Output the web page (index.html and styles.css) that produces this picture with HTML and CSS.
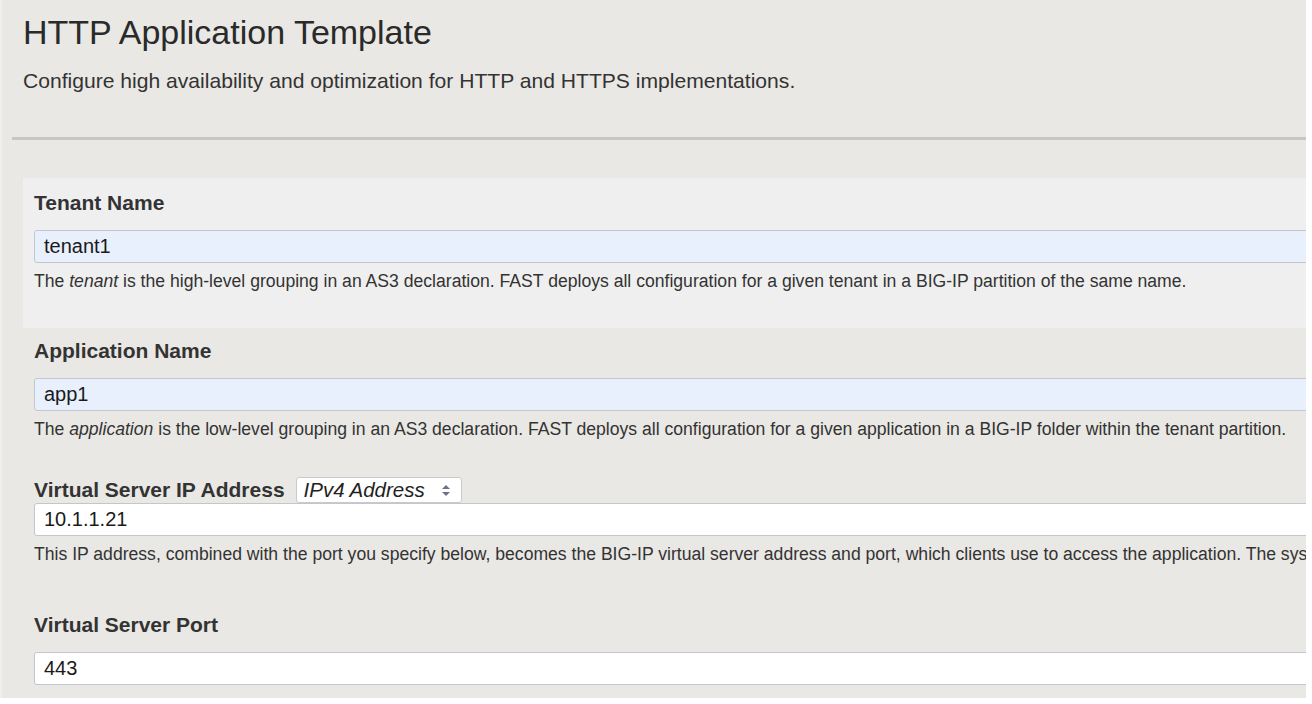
FILE: index.html
```html
<!DOCTYPE html>
<html lang="en">
<head>
<meta charset="utf-8">
<title>HTTP Application Template</title>
<link rel="stylesheet" href="styles.css">
</head>
<body>
<div class="page">
  <header class="header">
    <h1 class="title">HTTP Application Template</h1>
    <p class="subtitle">Configure high availability and optimization for HTTP and HTTPS implementations.</p>
  </header>
  <hr class="rule">
  <form class="form">
    <div class="field field--active">
      <label class="label">Tenant Name</label>
      <div class="input input--filled">tenant1</div>
      <p class="desc">The <em>tenant</em> is the high-level grouping in an AS3 declaration. FAST deploys all configuration for a given tenant in a BIG-IP partition of the same name.</p>
    </div>
    <div class="field">
      <label class="label">Application Name</label>
      <div class="input input--filled">app1</div>
      <p class="desc">The <em>application</em> is the low-level grouping in an AS3 declaration. FAST deploys all configuration for a given application in a BIG-IP folder within the tenant partition.</p>
    </div>
    <div class="field field--select">
      <div class="label-row">
        <label class="label">Virtual Server IP Address</label>
        <div class="select">
          <span class="select-text">IPv4 Address</span>
          <svg class="select-arrows" width="10" height="13" viewBox="0 0 10 13"><path d="M5 1 L9 5 L1 5 Z" fill="#6c7186"/><path d="M1 8 L9 8 L5 12 Z" fill="#6c7186"/></svg>
        </div>
      </div>
      <div class="input">10.1.1.21</div>
      <p class="desc">This IP address, combined with the port you specify below, becomes the BIG-IP virtual server address and port, which clients use to access the application. The system uses this information to create the virtual server on the BIG-IP system.</p>
    </div>
    <div class="field field--last">
      <label class="label">Virtual Server Port</label>
      <div class="input">443</div>
    </div>
  </form>
</div>
</body>
</html>
```
FILE: styles.css
```css
html, body {
  margin: 0;
  padding: 0;
  background: #ffffff;
}

.page {
  width: 1306px;
  height: 698px;
  overflow: hidden;
  background: #e9e8e4;
  font-family: "Liberation Sans", Arial, Helvetica, sans-serif;
  color: #333333;
  box-sizing: border-box;
  border-left: 2px solid #efefed;
}

.header {
  padding-left: 21px;
}

.title {
  margin: 12px 0 0;
  font-size: 34px;
  line-height: 40px;
  font-weight: normal;
  color: #2a2a2a;
}

.subtitle {
  margin: 17px 0 0;
  font-size: 21.1px;
  line-height: 24px;
  color: #333333;
}

.rule {
  margin: 44px 0 0 10px;
  height: 3px;
  border: 0;
  background: #c6c6c4;
}

.form {
  margin-top: 38px;
  padding-left: 21px;
}

.field {
  padding: 11px 0 37px 11px;
  white-space: nowrap;
  overflow: hidden;
}

.field--active {
  background: #efefef;
  padding-top: 13px;
}

.field--select {
  padding-top: 1px;
}

.field--last {
  padding-top: 12px;
}

.label {
  display: block;
  font-size: 21px;
  line-height: 24px;
  font-weight: bold;
  color: #333333;
  margin-bottom: 15px;
}

.label-row {
  display: flex;
  align-items: center;
  gap: 11px;
  height: 26px;
}

.label-row .label {
  margin-bottom: 0;
}

.select {
  display: flex;
  align-items: center;
  justify-content: space-between;
  box-sizing: border-box;
  width: 166px;
  height: 26px;
  padding: 0 10px 0 7px;
  background: #ffffff;
  border: 1px solid #c9cacc;
  border-radius: 3px;
}

.select-text {
  font-size: 20.5px;
  font-style: italic;
  color: #222222;
}

.input {
  box-sizing: border-box;
  width: 1300px;
  height: 33px;
  padding: 0 9px;
  font-size: 20px;
  line-height: 31px;
  color: #1a1a1a;
  background: #ffffff;
  border: 1px solid #c3c6cc;
  border-radius: 3px;
}

.input--filled {
  background: #e8f0fe;
}

.desc {
  margin: 8px 0 0;
  font-size: 17.6px;
  line-height: 20px;
  color: #333333;
}
```
